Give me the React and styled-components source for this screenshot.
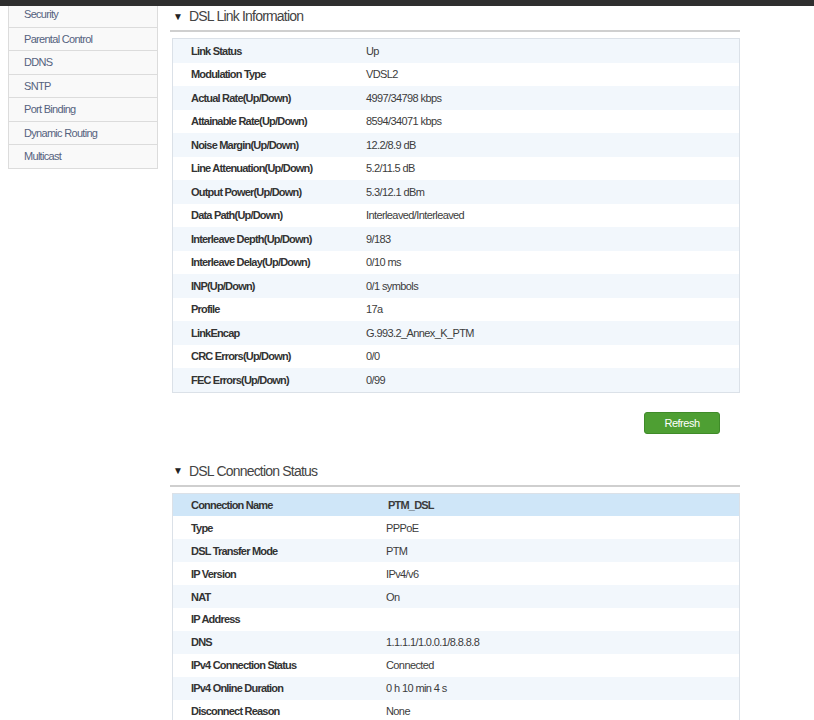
import React from 'react'
import styled, { createGlobalStyle } from 'styled-components'

const GlobalStyle = createGlobalStyle`
  body {
    margin: 0;
    background: #ffffff;
    font-family: 'Liberation Sans', Arial, sans-serif;
    color: #333333;
  }
`

const TopBar = styled.div`
  position: fixed;
  top: 0;
  left: 0;
  right: 0;
  height: 6px;
  background: #2f2f2f;
  z-index: 2;
`

const Page = styled.div`
  display: flex;
  flex-direction: row;
  align-items: flex-start;
  gap: 14px;
  padding-left: 8px;
`

const SideMenu = styled.ul`
  list-style: none;
  box-sizing: border-box;
  margin: 3px 0 0 0;
  padding: 0;
  width: 150px;
  flex-shrink: 0;
  border: 1px solid #dcdcdc;
  border-top: none;
  background: #f9f9f9;
`

const MenuItem = styled.li`
  height: 23.5px;
  box-sizing: border-box;
  padding-left: 15px;
  font-size: 11px;
  letter-spacing: -0.7px;
  color: #55627e;
  border-top: ${props => (props.$first ? 'none' : '1px solid #dcdcdc')};
  line-height: 22.5px;
`

const Main = styled.div`
  width: 568px;
  box-sizing: border-box;
  display: flex;
  flex-direction: column;
  padding-top: 4px;
`

const SectionTitle = styled.div`
  display: flex;
  align-items: center;
  height: 24px;
  padding: 0 0 2px 3px;
  margin: ${props => props.$top || '0'} 0 0 -2px;
  border-bottom: 2px solid #cfcfcf;
  font-size: 14px;
  letter-spacing: -0.8px;
  color: #444444;

  .arrow {
    font-size: 10px;
    width: 16px;
    letter-spacing: 0;
    color: #222;
  }
`

const InfoTable = styled.div`
  margin-top: 6px;
  border: 1px solid #dbe1e8;
`

const Row = styled.div`
  display: flex;
  align-items: center;
  height: ${props => props.$h};
  background: ${props =>
    props.$head ? '#cfe6f8' : props.$odd ? '#f2f7fc' : '#ffffff'};
  font-size: 11px;

  .label {
    width: ${props => props.$labelW};
    padding-left: 18px;
    font-weight: bold;
    letter-spacing: -0.8px;
    color: #333;
    flex-shrink: 0;
  }

  .value {
    color: #3c3c3c;
    letter-spacing: ${props => (props.$head ? '-0.8px' : '-0.6px')};
    font-weight: ${props => (props.$head ? 'bold' : 'normal')};
    padding-left: ${props => (props.$head ? '2px' : '0')};
  }
`

const ButtonBar = styled.div`
  display: flex;
  justify-content: flex-end;
  padding: 19px 20px 0 0;
`

const RefreshBtn = styled.button`
  width: 76px;
  height: 22px;
  border: 1px solid #3f8b29;
  border-radius: 3px;
  background: #4e9f33;
  color: #ffffff;
  font-family: 'Liberation Sans', Arial, sans-serif;
  font-size: 11px;
  letter-spacing: -0.5px;
  cursor: pointer;
`

const menu = [
  'Security',
  'Parental Control',
  'DDNS',
  'SNTP',
  'Port Binding',
  'Dynamic Routing',
  'Multicast',
]

const linkInfo = [
  ['Link Status', 'Up'],
  ['Modulation Type', 'VDSL2'],
  ['Actual Rate(Up/Down)', '4997/34798 kbps'],
  ['Attainable Rate(Up/Down)', '8594/34071 kbps'],
  ['Noise Margin(Up/Down)', '12.2/8.9 dB'],
  ['Line Attenuation(Up/Down)', '5.2/11.5 dB'],
  ['Output Power(Up/Down)', '5.3/12.1 dBm'],
  ['Data Path(Up/Down)', 'Interleaved/Interleaved'],
  ['Interleave Depth(Up/Down)', '9/183'],
  ['Interleave Delay(Up/Down)', '0/10 ms'],
  ['INP(Up/Down)', '0/1 symbols'],
  ['Profile', '17a'],
  ['LinkEncap', 'G.993.2_Annex_K_PTM'],
  ['CRC Errors(Up/Down)', '0/0'],
  ['FEC Errors(Up/Down)', '0/99'],
]

const connStatus = [
  ['Connection Name', 'PTM_DSL'],
  ['Type', 'PPPoE'],
  ['DSL Transfer Mode', 'PTM'],
  ['IP Version', 'IPv4/v6'],
  ['NAT', 'On'],
  ['IP Address', ''],
  ['DNS', '1.1.1.1/1.0.0.1/8.8.8.8'],
  ['IPv4 Connection Status', 'Connected'],
  ['IPv4 Online Duration', '0 h 10 min 4 s'],
  ['Disconnect Reason', 'None'],
]

function App() {
  return (
    <>
      <GlobalStyle />
      <TopBar />
      <Page>
        <SideMenu>
          {menu.map((item, i) => (
            <MenuItem key={item} $first={i === 0}>{item}</MenuItem>
          ))}
        </SideMenu>

        <Main>
          <SectionTitle>
            <span className='arrow'>▼</span>DSL Link Information
          </SectionTitle>
          <InfoTable>
            {linkInfo.map(([label, value], i) => (
              <Row key={label} $h={'23.5px'} $labelW={'175px'} $odd={i % 2 === 0}>
                <span className='label'>{label}</span>
                <span className='value'>{value}</span>
              </Row>
            ))}
          </InfoTable>
          <ButtonBar>
            <RefreshBtn>Refresh</RefreshBtn>
          </ButtonBar>

          <SectionTitle $top={'25px'}>
            <span className='arrow'>▼</span>DSL Connection Status
          </SectionTitle>
          <InfoTable>
            {connStatus.map(([label, value], i) => (
              <Row
                key={label}
                $h={'22.9px'}
                $labelW={'195px'}
                $head={i === 0}
                $odd={i % 2 === 0}
              >
                <span className='label'>{label}</span>
                <span className='value'>{value}</span>
              </Row>
            ))}
          </InfoTable>
        </Main>
      </Page>
    </>
  )
}

export default App
